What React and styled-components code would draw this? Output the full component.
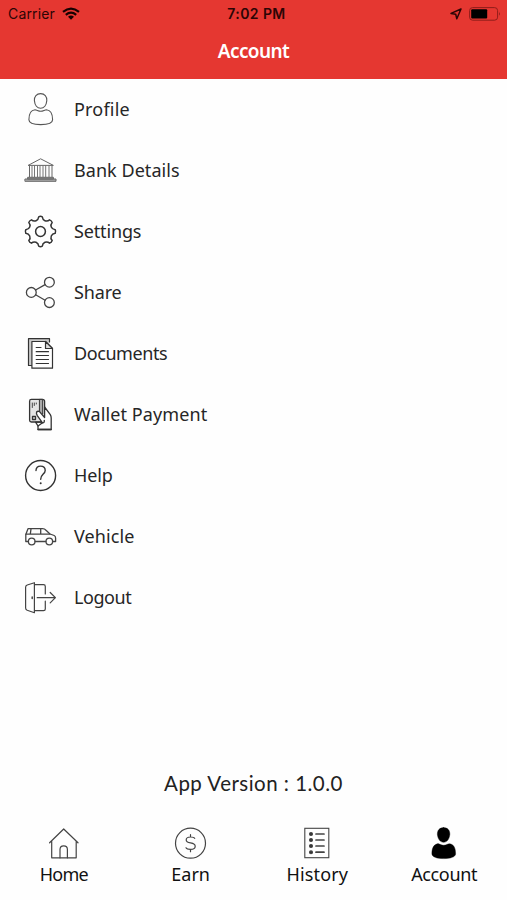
import React from "react";
import styled, { createGlobalStyle } from "styled-components";

const GlobalStyle = createGlobalStyle`
  body {
    margin: 0;
    background: #fff;
    font-family: "Noto Sans", "Open Sans", sans-serif;
  }
`;

const Screen = styled.div`
  display: flex;
  flex-direction: column;
  width: 507px;
  height: 900px;
  overflow: hidden;
  background: #fefefe;
`;

const Header = styled.header`
  height: 79px;
  background: #e53731;
`;

const StatusBar = styled.div`
  display: grid;
  grid-template-columns: 1fr auto 1fr;
  align-items: center;
  height: 27px;
  padding: 0 6px 0 8px;
  color: #2c0505;
  font-family: Inter, sans-serif;
`;

const StatusSide = styled.div`
  display: flex;
  align-items: center;
  justify-content: ${(props) => (props.$end ? "flex-end" : "flex-start")};
  gap: 7px;
`;

const Carrier = styled.span`
  font-size: 14px;
  line-height: 27px;
  letter-spacing: 0.15px;
`;

const Clock = styled.span`
  padding: 1px 0 0 4px;
  font-size: 14px;
  font-weight: 600;
  line-height: 26px;
  letter-spacing: 0.4px;
`;

const Title = styled.h1`
  margin: 0;
  color: #fff;
  font-size: 19px;
  font-weight: 600;
  line-height: 48px;
  text-align: center;
  letter-spacing: -0.6px;
`;

const Menu = styled.ul`
  flex: 1;
  margin: 0;
  padding: 0;
  list-style: none;
`;

const MenuItem = styled.li`
  display: flex;
  align-items: center;
  gap: 17px;
  height: 61px;
  padding-left: 24px;
  cursor: pointer;
`;

const MenuLabel = styled.span`
  padding-bottom: 2px;
  color: #262626;
  font-size: 18px;
  line-height: 24px;
  letter-spacing: ${(props) => props.$spacing || 0}px;
  white-space: nowrap;
`;

const Version = styled.p`
  margin: 0;
  height: 58px;
  color: #222;
  font-family: Lato, sans-serif;
  font-size: 20.5px;
  line-height: 28px;
  text-align: center;
  letter-spacing: 0.48px;
`;

const TabBar = styled.nav`
  display: grid;
  grid-template-columns: repeat(4, 1fr);
  height: 73px;
`;

const Tab = styled.div`
  display: flex;
  flex-direction: column;
  align-items: center;
  cursor: pointer;
`;

const TabLabel = styled.span`
  color: #111;
  font-size: 18px;
  line-height: 24px;
  margin-top: 2px;
  padding-left: 1px;
  letter-spacing: ${(props) => props.$spacing || 0}px;
`;

const Icon = styled.svg.attrs({ viewBox: "0 0 33 33" })`
  flex: none;
  width: 33px;
  height: 33px;
  fill: none;
  stroke: ${(props) => props.$color || "#333"};
  stroke-width: ${(props) => props.$weight || 1.1};
  stroke-linecap: round;
  stroke-linejoin: round;
`;

const headPath = "M16.6 .6C20.6 .6 23.1 3.4 22.8 7.6C22.4 12 20 15.3 16.6 15.3S10.8 12 10.4 7.6C10.1 3.4 12.6 .6 16.6 .6Z";
const bodyPath = "M11 16.8C12.8 16.8 14.2 18.3 16.7 18.3S20.6 16.8 22.4 16.8C26.8 17.2 28.6 21 28.6 26.8C28.6 30 23.4 31.6 16.7 31.6S4.9 30 4.9 26.8C4.9 21 6.6 17.2 11 16.8Z";

const polar = (angle, r) => {
  const rad = (angle * Math.PI) / 180;
  return `${(16.5 + r * Math.cos(rad)).toFixed(2)} ${(16.5 + r * Math.sin(rad)).toFixed(2)}`;
};

// eight teeth, one every 45 degrees
const gearPath =
  [0, 45, 90, 135, 180, 225, 270, 315]
    .map((a, i) => `${i ? "L" : "M"}${polar(a - 7, 14.8)}Q${polar(a, 15.6)} ${polar(a + 7, 14.8)}C${polar(a + 11, 11)} ${polar(a + 34, 11)} ${polar(a + 38, 14.8)}`)
    .join("") + "Z";

const ProfileIcon = () => (
  <Icon $color="#555">
    <path d={headPath} />
    <path d={bodyPath} />
  </Icon>
);

const BankIcon = () => (
  <Icon $color="#666" $weight={1}>
    <path d="M4.5 11.2L16.6 4.8L29 11.2ZM5.5 11.5V23M28 11.5V23" />
    <path d="M8 12V23M10.5 12V23M13.5 12V23M16 12V23M19 12V23M21.7 12V23M25 12V23" strokeWidth="0.9" />
    <path d="M4 23.3H29.4V25H4ZM1.3 25H32V27.3H1.3Z" fill="#aaa" />
  </Icon>
);

const SettingsIcon = () => (
  <Icon $weight={1.5}>
    <path d={gearPath} />
    <circle cx="16.5" cy="16.5" r="4.9" />
  </Icon>
);

const ShareIcon = () => (
  <Icon $color="#444" $weight={1.3}>
    <circle cx="7.3" cy="16.4" r="4.9" />
    <circle cx="25.4" cy="6.2" r="4.9" />
    <circle cx="25.4" cy="26.6" r="4.9" />
    <path d="M11.6 14L21.1 8.6M11.6 18.8L21.1 24.2" />
  </Icon>
);

const DocumentsIcon = () => (
  <Icon $weight={1.2}>
    <path d="M8 28.5H4.5V1.7H25.5V5" fill="#ccc" />
    <path d="M7.9 4.5H21.5L28.5 11.5V31.2H7.9Z" fill="#fff" />
    <path d="M21.5 4.5V11.5H28.5Z" fill="#ddd" />
    <path d="M12.2 10.5H17M12.2 14.7H24.5M12.2 18.5H24.5M12.2 22.5H24.5M12.2 26.5H24.5" />
  </Icon>
);

const WalletIcon = () => (
  <Icon $weight={1.3}>
    <path d="M7.4 1.4H18.3Q20.6 1.4 20.6 3.5V24H7.4Q5.6 24 5.6 22.2V3.2Q5.6 1.4 7.4 1.4Z" fill="#e4e4e4" />
    <path d="M15.8 1.4H18.7V16H15.8Z" fill="#aaa" strokeWidth="1" />
    <path d="M8.3 5V9.5M10.3 5V7.5M12.3 5V6" strokeWidth="0.9" />
    <rect x="8.5" y="18.5" width="3" height="3" />
    <path d="M12.6 14C14 12.5 15.7 13.4 17 15.3L20.6 19.5V9L26.3 16.6Q27.2 18 27.2 20V31.5H14V28L18.5 24.8L13.3 17.6Q12 15.5 12.6 14Z" fill="#fff" />
    <path d="M14 28L11.6 24.2H17M18.5 24.8Q20.5 25 20.3 22.3M14 31.5H27.2" />
  </Icon>
);

const HelpIcon = () => (
  <Icon $weight={1.4}>
    <circle cx="16.6" cy="16.5" r="15" />
    <path d="M12 11.6C12 8.8 13.7 7.1 16.5 7.1S21.2 8.8 21.2 11.4C21.2 15 16.7 15.3 16.7 20.2" />
    <path d="M16.7 24.2V24.3" strokeWidth="2" />
  </Icon>
);

const VehicleIcon = () => (
  <Icon $color="#444" $weight={1.3}>
    <path d="M4.2 21.5H1.8V14.4L4 8.7H18.5Q20.6 8.7 22 10.3L26 14L30.2 15.5Q31.6 16.1 31.6 18V21.5H28.9M11.2 21.5H21.8" />
    <path d="M2 14.2H26M7 8.8L6.3 14.2M16.7 8.8V14.2" />
    <circle cx="7.7" cy="21.5" r="3.3" />
    <circle cx="25.3" cy="21.5" r="3.3" />
  </Icon>
);

const LogoutIcon = () => (
  <Icon $color="#444" $weight={1.2}>
    <path d="M10.4 1.7L3.2 4Q1.6 4.6 1.6 6.2V27Q1.6 28.5 3.2 29.2L10.4 31.7Z" />
    <path d="M10.5 3.6H19.5Q21.3 3.6 21.3 5.4V13M21.3 20.2V28Q21.3 29.7 19.5 29.7H10.5" />
    <path d="M13.2 16.7H31.4M26.2 11.5L31.4 16.7L26.2 21.9" />
    <path d="M8.2 16V17.4" strokeWidth="1.5" />
  </Icon>
);

const HomeIcon = () => (
  <Icon $color="#444" $weight={1.2}>
    <path d="M2.6 15.8L16.7 2L31 15.8M4.7 14V30.8H29.2V14" />
    <path d="M13 30.8V22.5Q13 18.8 16.7 18.8T20.4 22.5V30.8" />
  </Icon>
);

const EarnIcon = () => (
  <Icon $color="#444" $weight={1.2}>
    <circle cx="16.5" cy="16.2" r="15" />
    <path d="M20.7 11.4C20.3 10.4 18.8 10 16.5 10C13.8 10 12.2 11 12.2 13C12.2 17.4 21.2 14.4 21.2 19.2C21.2 21.3 19.3 22.4 16.5 22.4C14.1 22.4 12.5 21.9 12 20.8M16.5 7.7V10M16.5 22.4V24.7" />
  </Icon>
);

const HistoryIcon = () => (
  <Icon $color="#444" $weight={1.1}>
    <rect x="4.8" y="1.3" width="24" height="29.4" strokeLinejoin="miter" />
    {[7, 13, 19, 25.2].map((y) => (
      <g key={y}>
        <circle cx="11" cy={y} r="1.5" fill="#333" />
        <path d={`M16 ${y}H24`} strokeWidth="1.7" />
      </g>
    ))}
  </Icon>
);

const AccountIcon = () => (
  <Icon $color="#000" $weight={0.4}>
    <path d={headPath} fill="#000" />
    <path d={bodyPath} fill="#000" />
  </Icon>
);

const WifiIcon = () => (
  <svg width="18" height="13" viewBox="0 0 18 13" fill="none" stroke="#160101" strokeWidth="2.2">
    <path d="M1 4.8Q9 -1.7 17 4.8M3.8 7.8Q9 3.6 14.2 7.8" />
    <path d="M6 9.7Q9 7.5 12 9.7L9 12.7Z" fill="#160101" stroke="none" />
  </svg>
);

const LocationIcon = () => (
  <svg width="12" height="12" viewBox="0 0 12 12" fill="none" stroke="#2c0505" strokeWidth="1.5" strokeLinejoin="round">
    <path d="M11 1L1 5.4L5.7 6.2L6.8 10.8Z" />
  </svg>
);

const BatteryIcon = () => (
  <svg width="32" height="14" viewBox="0 0 32 14">
    <rect x="0.6" y="0.6" width="28" height="12.6" rx="3" fill="none" stroke="#8f1d1a" />
    <rect x="2.2" y="2.2" width="16" height="9.4" rx="1" fill="#000" />
    <path d="M30 4.8Q31.8 6.8 30 8.8Z" fill="#8f1d1a" />
  </svg>
);

const menuItems = [
  { label: "Profile", icon: ProfileIcon, spacing: 0.2 },
  { label: "Bank Details", icon: BankIcon, spacing: 0.05 },
  { label: "Settings", icon: SettingsIcon, spacing: -0.15 },
  { label: "Share", icon: ShareIcon, spacing: -0.15 },
  { label: "Documents", icon: DocumentsIcon, spacing: -0.42 },
  { label: "Wallet Payment", icon: WalletIcon, spacing: 0.1 },
  { label: "Help", icon: HelpIcon, spacing: -0.15 },
  { label: "Vehicle", icon: VehicleIcon, spacing: 0.1 },
  { label: "Logout", icon: LogoutIcon, spacing: -0.45 },
];

const tabs = [
  { label: "Home", icon: HomeIcon, spacing: -0.7 },
  { label: "Earn", icon: EarnIcon, spacing: 0 },
  { label: "History", icon: HistoryIcon, spacing: 0.15 },
  { label: "Account", icon: AccountIcon, spacing: -0.35 },
];

const App = () => {
  return (
    <Screen>
      <GlobalStyle />
      <Header>
        <StatusBar>
          <StatusSide>
            <Carrier>Carrier</Carrier>
            <WifiIcon />
          </StatusSide>
          <Clock>7:02 PM</Clock>
          <StatusSide $end>
            <LocationIcon />
            <BatteryIcon />
          </StatusSide>
        </StatusBar>
        <Title>Account</Title>
      </Header>
      <Menu>
        {menuItems.map(({ label, icon: ItemIcon, spacing }) => (
          <MenuItem key={label}>
            <ItemIcon />
            <MenuLabel $spacing={spacing}>{label}</MenuLabel>
          </MenuItem>
        ))}
      </Menu>
      <Version>App Version : 1.0.0</Version>
      <TabBar>
        {tabs.map(({ label, icon: TabIcon, spacing }) => (
          <Tab key={label}>
            <TabIcon />
            <TabLabel $spacing={spacing}>{label}</TabLabel>
          </Tab>
        ))}
      </TabBar>
    </Screen>
  );
};

export default App;
